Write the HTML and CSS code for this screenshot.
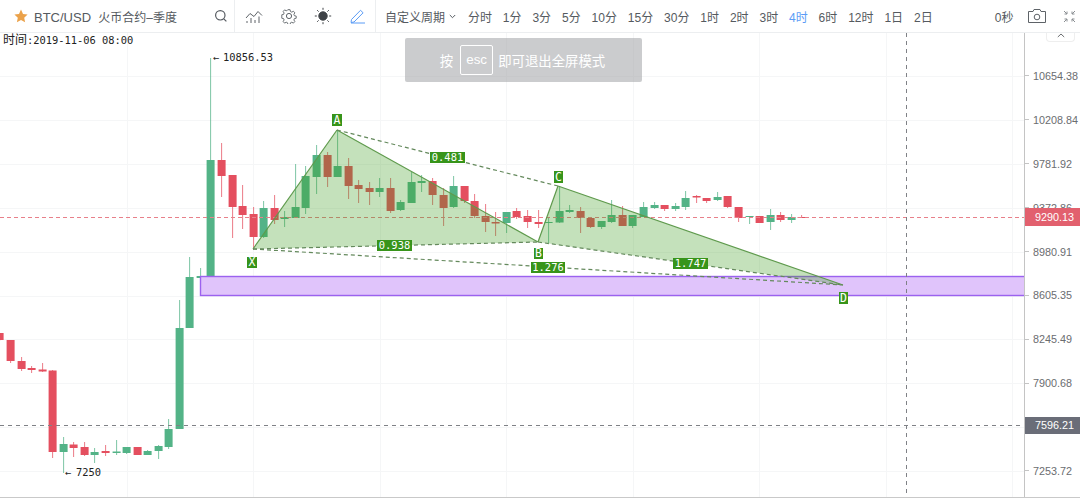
FILE: index.html
```html
<!DOCTYPE html>
<html lang="zh-CN">
<head>
    <meta charset="UTF-8">
    <meta name="viewport" content="width=device-width, initial-scale=1.0">
    <title>BTC/USD 火币合约-季度</title>
    <link rel="stylesheet" href="styles.css">
</head>
<body>

<div class="toolbar">
    <div class="tool-group symbol-group">
        <svg class="star" width="14" height="14" viewBox="0 0 14 14"><path d="M7 .6l2 4.3 4.6.6-3.4 3.2.9 4.6L7 10.9l-4.1 2.4.9-4.6L.4 5.5 5 4.9z"/></svg>
        <span class="symbol">BTC/USD&nbsp; <span class="symbol-cn">火币合约–季度</span></span>
        <svg class="search" width="14" height="14" viewBox="0 0 14 14"><circle cx="6.3" cy="6.3" r="4.7"/><path d="M9.8 9.8l2.6 2.6"/></svg>
    </div>
    <div class="tool-group icon-group">
        <svg class="icon" width="18" height="15" viewBox="0 0 18 15"><path d="M1 9l4-4.5 4 3L13 2.500l4 4"/><path d="M2 14v-2M6 14V9M10 14v-3M14 14V7.500"/></svg>
        <svg class="icon" width="16" height="16" viewBox="0 0 16 16"><circle cx="8" cy="8" r="2.600"/><path d="M6.800 1h2.400l.4 2 1.500.7 1.800-1 1.600 1.800-1.100 1.700.6 1.500 2 .4v2.400l-2 .4-.6 1.500 1.100 1.700-1.600 1.800-1.800-1-1.500.7-.4 2H6.800l-.4-2-1.500-.7-1.800 1-1.600-1.800 1.100-1.700-.6-1.500-2-.4V6.600l2-.4.6-1.500-1.100-1.700 1.600-1.800 1.800 1 1.500-.7z" transform="translate(.8 .8) scale(.9)"/></svg>
        <svg class="icon sun" width="18" height="18" viewBox="0 0 18 18"><circle cx="9" cy="9" r="4.200"/><path d="M9 .8v2M9 15.200v2M.8 9h2M15.200 9h2M3.200 3.200l1.400 1.400M13.400 13.400l1.400 1.400M3.200 14.800l1.400-1.400M13.400 4.600l1.400-1.400"/></svg>
        <svg class="icon pencil" width="16" height="16" viewBox="0 0 16 16"><path d="M1.500 11.500L10.500 2.300l2.600 2.500-9.100 9.200-3 .5zM1 15h14"/></svg>
    </div>
    <div class="periods">
        <span class="period custom">自定义周期<svg width="7" height="5" viewBox="0 0 7 5"><path d="M.8 1l2.700 2.700L6.200 1"/></svg></span>
        <span class="period">分时</span>
        <span class="period">1分</span>
        <span class="period">3分</span>
        <span class="period">5分</span>
        <span class="period">10分</span>
        <span class="period">15分</span>
        <span class="period">30分</span>
        <span class="period">1时</span>
        <span class="period">2时</span>
        <span class="period">3时</span>
        <span class="period active">4时</span>
        <span class="period">6时</span>
        <span class="period">12时</span>
        <span class="period">1日</span>
        <span class="period">2日</span>
    </div>
    <div class="tool-right">
        <span class="period">0秒</span>
        <svg class="icon camera" width="18" height="14" viewBox="0 0 18 14"><path d="M.5 2.500h4.500l1-2h6l1 2h4.500v11H.5z"/><circle cx="9" cy="8" r="2.800"/></svg>
        <svg class="icon expand" width="13" height="13" viewBox="0 0 13 13"><path d="M1 1l3 3M4 1.500V4H1.500M12 1L9 4M9 1.500V4h2.500M1 12l3-3M4 11.500V9H1.500M12 12L9 9M9 11.500V9h2.500"/></svg>
    </div>
</div>

<div class="chart-row">
    <div class="chart-pane">
        <svg id="chart" class="chart" width="1024" height="464" viewBox="0 33 1024 464"></svg>
        <div class="esc-toast">
            <span>按</span>
            <span class="esc-key">esc</span>
            <span>即可退出全屏模式</span>
        </div>
    </div>
    <div class="price-axis" id="price-axis">
        <div class="axis-toggle"><svg width="8" height="5" viewBox="0 0 8 5"><path d="M.8 4L4 1l3.200 3"/></svg></div>
        <div class="price-tag tag-last">9290.13</div>
        <div class="price-tag tag-cross">7596.21</div>
    </div>
</div>

<script>
    document.addEventListener('DOMContentLoaded', () => {
        const svg = document.getElementById('chart');
        const axis = document.getElementById('price-axis');

        const add = (name, attrs, text) => {
            const el = document.createElementNS('http://www.w3.org/2000/svg', name);
            Object.keys(attrs).forEach(key => el.setAttribute(key, attrs[key]));
            if (text) el.innerHTML = text;
            svg.appendChild(el);
            return el;
        };
        const line = (x1, y1, x2, y2, cls) => add('line', { x1, y1, x2, y2, class: cls });

        // grid
        const prices = ['10654.38', '10208.84', '9781.92', '9372.86', '8980.91', '8605.35', '8245.49', '7900.68', '7570.30', '7253.72'];
        prices.forEach((price, i) => {
            const y = Math.round(76 + i * 43.9) + 0.5;
            line(0, y, 1024, y, 'grid');
            const row = document.createElement('div');
            row.className = 'axis-row';
            row.innerHTML = `<i></i><span>${price}</span>`;
            axis.appendChild(row);
        });
        for (let i = 1; i <= 8; i++) {
            const x = Math.round(i * 126.5) + 0.5;
            line(x, 33, x, 497, 'grid');
        }

        // candles in screen pixels: body top, body bottom, wick top, wick bottom, colour
        const candles = [
            [333, 340, 333, 341, 'r'], [340, 361, 340, 363, 'r'], [361, 369, 357, 371, 'r'], [368, 370, 366, 373, 'r'],
            [369.5, 371.5, 363, 372, 'r'], [370.5, 452, 370, 458, 'r'], [444, 452, 437, 473, 'g'], [444.5, 448, 442, 457, 'r'],
            [447, 455, 442, 456, 'r'], [452, 455, 448, 463, 'g'], [451, 453, 445, 456, 'r'], [451.5, 453, 440, 455, 'g'],
            [447, 453, 447, 454, 'g'], [447, 455, 447, 455, 'r'], [451, 455, 450, 455, 'g'], [446, 451, 445, 459, 'g'],
            [429, 447, 419, 449, 'g'], [328, 429, 300, 429, 'g'], [277, 328, 257, 328, 'g'], [276, 278, 268, 279, 'g'],
            [160, 276, 58, 279, 'g'], [160, 176, 143, 197, 'r'], [175, 207, 175, 238, 'r'], [206, 215, 185, 229, 'r'],
            [214, 237, 207, 250, 'r'], [208, 237, 201, 238, 'g'], [208, 220, 195, 224, 'r'], [217, 219, 211, 227, 'g'],
            [207, 218, 164, 218, 'g'], [176, 208, 166, 214, 'g'], [155, 177, 145, 194, 'g'], [155, 177, 152, 187, 'r'],
            [166, 177, 130, 177, 'g'], [166, 186, 158, 199, 'r'], [185, 189, 180, 203, 'r'], [188, 192, 182, 205, 'r'],
            [188, 192, 178, 197, 'g'], [188, 211, 178, 213, 'r'], [202, 210, 200, 211, 'g'], [182, 203, 172, 203, 'g'],
            [181, 183, 175, 192, 'g'], [181, 195, 178, 205, 'r'], [195, 208, 188, 226, 'r'], [186, 207, 176, 208, 'g'],
            [186, 201, 186, 203, 'r'], [201, 216, 194, 218, 'r'], [216, 222, 204, 232, 'r'], [222, 223.5, 212, 236, 'r'],
            [212, 223, 212, 233, 'g'], [211, 217, 208, 219, 'r'], [216, 222, 210, 228, 'r'], [222, 224, 210, 228, 'r'],
            [222, 223, 218, 243, 'g'], [211, 222.5, 186, 223, 'g'], [210, 212, 205, 213, 'g'], [211, 218, 207, 233, 'r'],
            [218, 227, 218, 228, 'r'], [221, 227, 221, 229, 'g'], [215, 222, 200, 223, 'g'], [215, 226, 206, 226, 'r'],
            [215, 226, 215, 228, 'g'], [207, 217, 202, 217, 'g'], [205, 208, 202, 209, 'g'], [205, 209, 205, 211, 'r'],
            [206, 209, 203, 211, 'g'], [198, 207, 191, 210, 'g'], [196, 197.5, 195, 203, 'r'], [198, 201, 198, 203, 'r'],
            [197, 200, 192, 201, 'g'], [196, 207, 196, 208, 'r'], [207, 218, 207, 222, 'r'], [216, 217, 216, 224, 'g'],
            [216, 223, 216, 223, 'r'], [215, 222, 209, 230, 'g'], [215, 220, 212, 222, 'r'], [217, 220, 214, 223, 'g'],
            [217, 218, 215, 218, 'r']
        ];
        candles.forEach((c, i) => {
            const x = -0.55 + i * 10.55;
            const colour = c[4] === 'g' ? 'up' : 'down';
            add('rect', { x: Math.round(x) + 0.1, y: c[2], width: 1, height: c[3] - c[2], class: 'wick ' + colour });
            add('rect', { x: Math.round(x) - 3.4, y: c[0], width: 8, height: c[1] - c[0], class: colour });
        });

        // zone and crosshair
        add('rect', { x: 200.5, y: 276.5, width: 830, height: 19, class: 'zone' });
        line(0, 217.5, 1024, 217.5, 'last-line');
        line(0, 425.5, 1024, 425.5, 'cross-line');
        line(906.5, 33, 906.5, 497, 'cross-line');

        // harmonic pattern
        const X = [253, 249], A = [337, 130], B = [538, 242], C = [558, 186], D = [843, 285];
        [[X, A, B], [B, C, D]].forEach(tri => add('polygon', { points: tri.join(' '), class: 'wing' }));
        [[X, A], [A, B], [B, C], [C, D]].forEach(p => line(p[0][0], p[0][1], p[1][0], p[1][1], 'leg'));
        [[A, C], [X, B], [X, D], [B, D]].forEach(p => line(p[0][0], p[0][1], p[1][0], p[1][1], 'ratio'));

        const labels = [
            ['A', 332, 114, 10, 12], ['X', 247, 257, 10, 11], ['B', 534, 248, 9, 11], ['C', 554, 171, 9, 12], ['D', 839, 292, 9, 12],
            ['0.481', 430, 152, 35, 11], ['0.938', 377, 240, 35, 11], ['1.276', 531, 262, 34, 11], ['1.747', 673, 258, 35, 11]
        ];
        labels.forEach(l => {
            add('rect', { x: l[1], y: l[2], width: l[3], height: l[4], class: 'label-box' });
            add('text', { x: l[1] + l[3] / 2, y: l[2] + l[4] - 2, class: l[0].length === 1 ? 'label-text point' : 'label-text' }, l[0]);
        });

        // high, low and time
        add('text', { x: 213, y: 61, class: 'note' }, '←');
        add('text', { x: 223, y: 61, class: 'note' }, '10856.53');
        add('text', { x: 65, y: 476, class: 'note' }, '←');
        add('text', { x: 76, y: 476, class: 'note' }, '7250');
        add('text', { x: 3, y: 44, class: 'note' }, '<tspan class="note-cn">时间</tspan>:2019-11-06 08:00');
    });
</script>

</body>
</html>
```

FILE: styles.css
```css
html, body {
    margin: 0;
    padding: 0;
    height: 499px;
    overflow: hidden;
    background: #fff;
    font-family: "Liberation Sans", "Noto Sans CJK SC", sans-serif;
}
svg {
    display: block;
    fill: none;
}
.toolbar {
    display: flex;
    align-items: center;
    height: 32px;
    border-bottom: 1px solid #eceef0;
    color: #555a60;
    font-size: 12px;
}
.tool-group {
    display: flex;
    align-items: center;
    height: 100%;
    border-right: 1px solid #eceef0;
}
.symbol-group {
    width: 235px;
    padding-left: 14px;
    box-sizing: border-box;
}
.star path {
    fill: #eba24a;
}
.symbol {
    margin-left: 6px;
    width: 180px;
    font-size: 13px;
    white-space: nowrap;
}
.symbol-cn {
    font-size: 12px;
}
.search {
    stroke: #555a60;
    stroke-width: 1.2;
}
.icon-group {
    width: 141px;
    padding: 0 9px 0 10px;
    box-sizing: border-box;
    justify-content: space-between;
}
.icon {
    stroke: #5e6368;
    stroke-width: 1;
}
.sun {
    stroke: #3f4347;
}
.sun circle {
    fill: #3f4347;
}
.pencil {
    stroke: #5b9cf6;
}
.periods {
    display: flex;
    align-items: center;
    gap: 10.9px;
    margin-left: 9px;
}
.period {
    white-space: nowrap;
}
.custom {
    display: flex;
    align-items: center;
    gap: 4px;
    margin-right: 1px;
}
.custom svg {
    stroke: #555a60;
}
.active {
    color: #5b9cf6;
}
.tool-right {
    display: flex;
    align-items: center;
    gap: 15px;
    margin-left: 62px;
}
.expand {
    margin-left: 2px;
    stroke: #8a8e92;
}
.chart-row {
    display: flex;
    height: 464px;
    border-bottom: 1px solid #c9c9c9;
}
.chart-pane {
    position: relative;
    width: 1024px;
}
.grid {
    stroke: #f5f6f7;
    stroke-width: 1;
}
.wick {
    opacity: 0.75;
}
.up {
    fill: #53b387;
}
.down {
    fill: #e44f5f;
}
.zone {
    fill: #e0c4fb;
    stroke: #9b62ef;
    stroke-width: 1.4;
}
.last-line {
    stroke: #e8808a;
    stroke-width: 1;
    stroke-dasharray: 4 3;
}
.cross-line {
    stroke: #7f8186;
    stroke-width: 1;
    stroke-dasharray: 4 4;
}
.wing {
    fill: #3a9a1e;
    fill-opacity: 0.3;
}
.leg {
    stroke: #5f9a4d;
    stroke-width: 1.2;
}
.ratio {
    stroke: #64895c;
    stroke-width: 1.2;
    stroke-dasharray: 4 3;
}
.label-box {
    fill: #37941a;
}
.label-text {
    fill: #fff;
    font: 10.4px "DejaVu Sans Mono", monospace;
    text-anchor: middle;
}
.point {
    font-size: 11.5px;
}
.note {
    fill: #222;
    font: 10.4px "DejaVu Sans Mono", "Noto Sans CJK SC", monospace;
}
.note-cn {
    font-size: 12px;
}
.esc-toast {
    position: absolute;
    left: 405px;
    top: 5px;
    display: flex;
    align-items: center;
    justify-content: center;
    gap: 7px;
    box-sizing: border-box;
    width: 237px;
    height: 44px;
    padding-right: 2px;
    border-radius: 2px;
    background: rgba(160, 162, 165, 0.55);
    color: #fff;
    font-size: 13.4px;
}
.esc-key {
    display: block;
    width: 31px;
    height: 28px;
    margin-right: -2px;
    border: 1px solid #fff;
    border-radius: 2px;
    line-height: 28px;
    text-align: center;
}
.price-axis {
    position: relative;
    flex: 1;
    box-sizing: border-box;
    padding-top: 21px;
    border-left: 1px solid #c4c4c4;
    color: #6a6d70;
    font-size: 10.8px;
}
.axis-toggle {
    position: absolute;
    top: 0;
    right: 5px;
    display: flex;
    justify-content: center;
    width: 27px;
    height: 8px;
    border: 1px solid #eee;
    border-top: 0;
    border-radius: 0 0 4px 4px;
}
.axis-toggle svg {
    stroke: #6a6d70;
}
.axis-row {
    display: flex;
    align-items: center;
    gap: 4px;
    height: 43.9px;
}
.axis-row i {
    display: block;
    width: 4px;
    height: 1px;
    background: #c4c4c4;
}
.price-tag {
    position: absolute;
    left: 0;
    right: 0;
    z-index: 1;
    height: 18px;
    padding-left: 10px;
    color: #fff;
    line-height: 18px;
}
.tag-last {
    top: 175px;
    background: #e2606e;
}
.tag-cross {
    top: 384px;
    height: 17px;
    line-height: 17px;
    background: #6a6d78;
}
```
